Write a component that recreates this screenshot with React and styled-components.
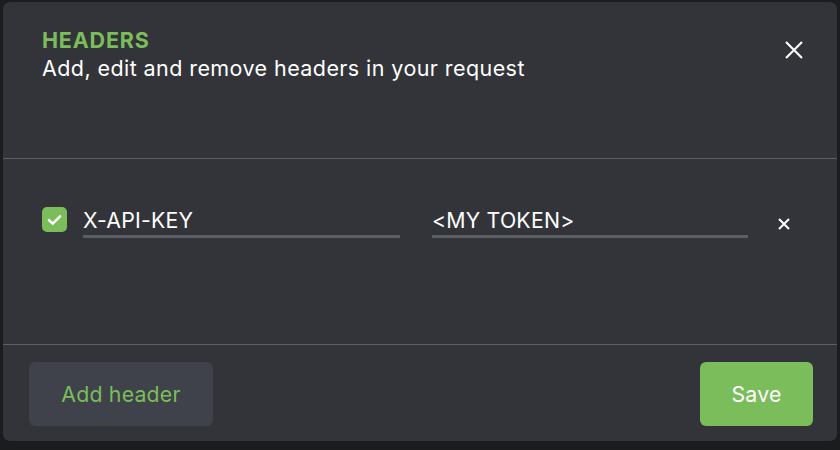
import styled, { createGlobalStyle } from "styled-components";

const Global = createGlobalStyle`
  html, body {
    margin: 0;
    background: #1b1c1e;
    font-family: Inter, "Noto Sans", sans-serif;
  }
  * { box-sizing: border-box; }
`;

const Page = styled.div`
  width: 840px;
  height: 450px;
  padding: 2px 3px 9px 3px;
`;

const Modal = styled.div`
  width: 834px;
  height: 439px;
  background: #333439;
  border-radius: 7px;
  display: flex;
  flex-direction: column;
`;

const Header = styled.header`
  height: 157px;
  padding: 25px 33px 0 39px;
  display: flex;
  justify-content: space-between;
  align-items: flex-start;
  border-bottom: 1px solid #5b5e63;
`;

const Title = styled.h2`
  margin: 0;
  color: #7bbd5a;
  font-size: 21.5px;
  font-weight: 700;
  line-height: 26px;
  letter-spacing: 0.8px;
`;

const Subtitle = styled.p`
  margin: 2px 0 0;
  color: #fff;
  font-size: 21.5px;
  line-height: 27px;
  letter-spacing: 0.42px;
`;

const CloseButton = styled.button`
  margin-top: 13px;
  background: none;
  border: 0;
  padding: 0;
  width: 20px;
  height: 20px;
  cursor: pointer;
`;

const Body = styled.div`
  flex: 1;
  padding: 48px 0 0 39px;
  border-bottom: 1px solid #5b5e63;
`;

const Row = styled.div`
  display: flex;
  align-items: flex-start;
`;

const Check = styled.span`
  width: 25px;
  height: 25px;
  border-radius: 5px;
  background: #7bbd5a;
  display: grid;
  place-items: center;
  margin-right: 16px;
`;

const Field = styled.div`
  width: ${(p) => p.$w}px;
  margin-right: ${(p) => p.$gap || 0}px;
  color: #fff;
  font-size: 21.3px;
  line-height: 26px;
  padding-bottom: 2px;
  border-bottom: 3px solid #5a5f64;
  letter-spacing: 0.2px;
`;

const RemoveButton = styled.button`
  margin-top: 10px;
  background: none;
  border: 0;
  padding: 0;
  width: 14px;
  height: 14px;
`;

const Footer = styled.footer`
  height: 96px;
  padding: 17px 24px 0 26px;
  display: flex;
  justify-content: space-between;
  align-items: flex-start;
`;

const Button = styled.button`
  height: 64px;
  width: ${(p) => (p.$primary ? 113 : 184)}px;
  padding: 0;
  border: 0;
  border-radius: 6px;
  background: ${(p) => (p.$primary ? "#7bbd5a" : "#3f424a")};
  color: ${(p) => (p.$primary ? "#fff" : "#7bbd5a")};
  font-family: inherit;
  font-size: 21.3px;
  letter-spacing: 0.2px;
`;

export default function App() {
  return (
    <Page>
      <Global />
      <Modal>
        <Header>
          <div>
            <Title>HEADERS</Title>
            <Subtitle>Add, edit and remove headers in your request</Subtitle>
          </div>
          <CloseButton aria-label="close">
            <svg width="20" height="20" viewBox="0 0 20 20">
              <path d="M2 2 L18 18 M18 2 L2 18" stroke="#fff" strokeWidth="2.1" />
            </svg>
          </CloseButton>
        </Header>
        <Body>
          <Row>
            <Check>
              <svg width="15" height="12" viewBox="0 0 15 12">
                <path d="M2 6.2 L5.8 9.6 L13 2.4" stroke="#fff" strokeWidth="2.6" fill="none" strokeLinecap="round" strokeLinejoin="round" />
              </svg>
            </Check>
            <Field $w={317} $gap={32}>X-API-KEY</Field>
            <Field $w={316} $gap={29}>&lt;MY TOKEN&gt;</Field>
            <RemoveButton aria-label="remove">
              <svg width="14" height="14" viewBox="0 0 14 14">
                <path d="M2 2 L12 12 M12 2 L2 12" stroke="#fff" strokeWidth="2" />
              </svg>
            </RemoveButton>
          </Row>
        </Body>
        <Footer>
          <Button>Add header</Button>
          <Button $primary>Save</Button>
        </Footer>
      </Modal>
    </Page>
  );
}
